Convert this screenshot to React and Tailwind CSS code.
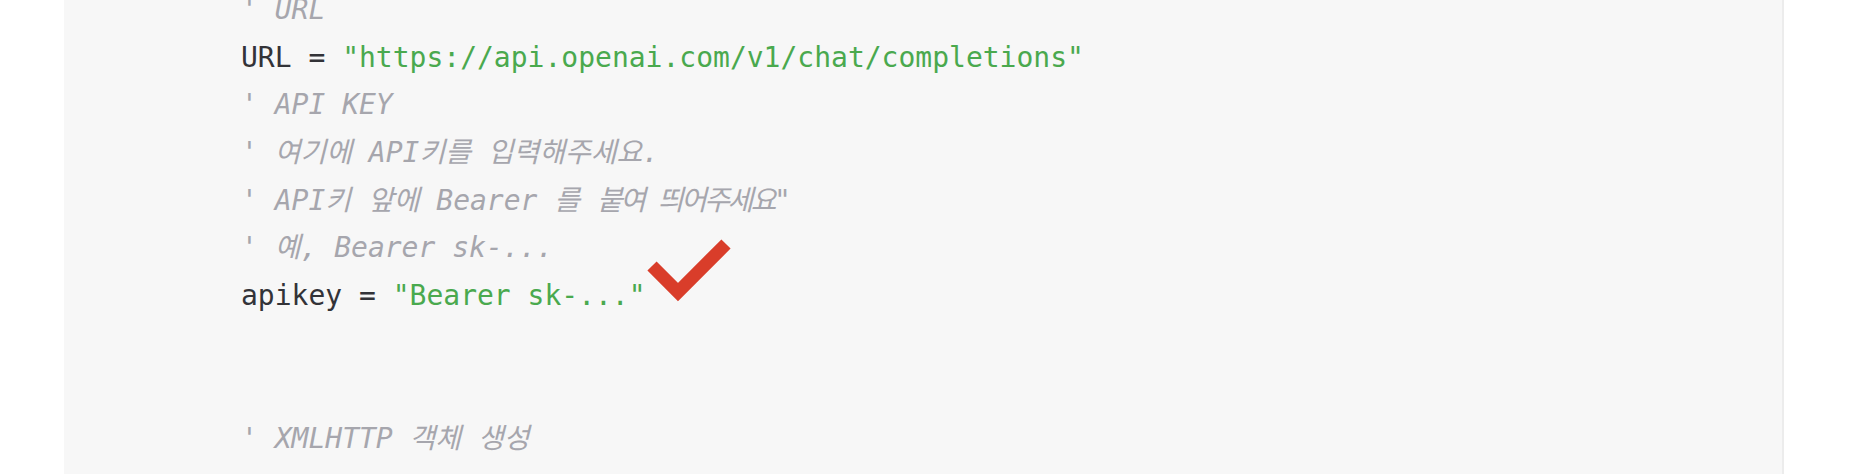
const lines = [
  [{ t: "' URL", c: 'cm' }],
  [{ t: 'URL = ', c: 'tx' }, { t: '"https://api.openai.com/v1/chat/completions"', c: 'st' }],
  [{ t: "' API KEY", c: 'cm' }],
  [{ t: "' 여기에 API키를 입력해주세요.", c: 'cm' }],
  [{ t: "' API키 앞에 Bearer 를 ", c: 'cm' }, { t: '붙여 띄어주세요"', c: 'cm tight' }],
  [{ t: "' 예, Bearer sk-...", c: 'cm' }],
  [{ t: 'apikey = ', c: 'tx' }, { t: '"Bearer sk-..."', c: 'st' }, { check: true }],
  [],
  [],
  [{ t: "' XMLHTTP 객체 생성", c: 'cm' }],
]

const tone = {
  cm: 'text-[#a6a6ad] italic',
  'cm tight': 'text-[#a6a6ad] italic tracking-[-2.5px]',
  tx: 'text-[#333338]',
  st: 'text-[#4aa94e]',
}

// red tick drawn over the code, to the right of the apikey line
function Check() {
  return (
    <span className="relative inline-block w-0">
      <svg
        className="absolute left-[-2px] top-[-72px]"
        width="90"
        height="70"
        viewBox="0 0 90 70"
      >
        <polyline
          points="8,33 34,59 82,11"
          fill="none"
          stroke="#d93d2a"
          strokeWidth="13"
          strokeLinejoin="miter"
        />
      </svg>
    </span>
  )
}

export default function App() {
  return (
    <div className="w-[1866px] h-[474px] bg-white overflow-hidden">
      <div className="ml-[64px] w-[1720px] h-full bg-[#f7f7f7] border-r-2 border-[#ececec] overflow-hidden">
        <div
          className="mt-[-14px] pl-[177px] flex flex-col text-[28px]"
          style={{ fontFamily: '"DejaVu Sans Mono", "Noto Sans CJK KR", monospace' }}
        >
          {lines.map((parts, i) => (
            <div key={i} className="h-[47.7px] leading-[47.7px] whitespace-pre">
              {parts.map((p, j) =>
                p.check ? <Check key={j} /> : <span key={j} className={tone[p.c]}>{p.t}</span>
              )}
            </div>
          ))}
        </div>
      </div>
    </div>
  )
}
